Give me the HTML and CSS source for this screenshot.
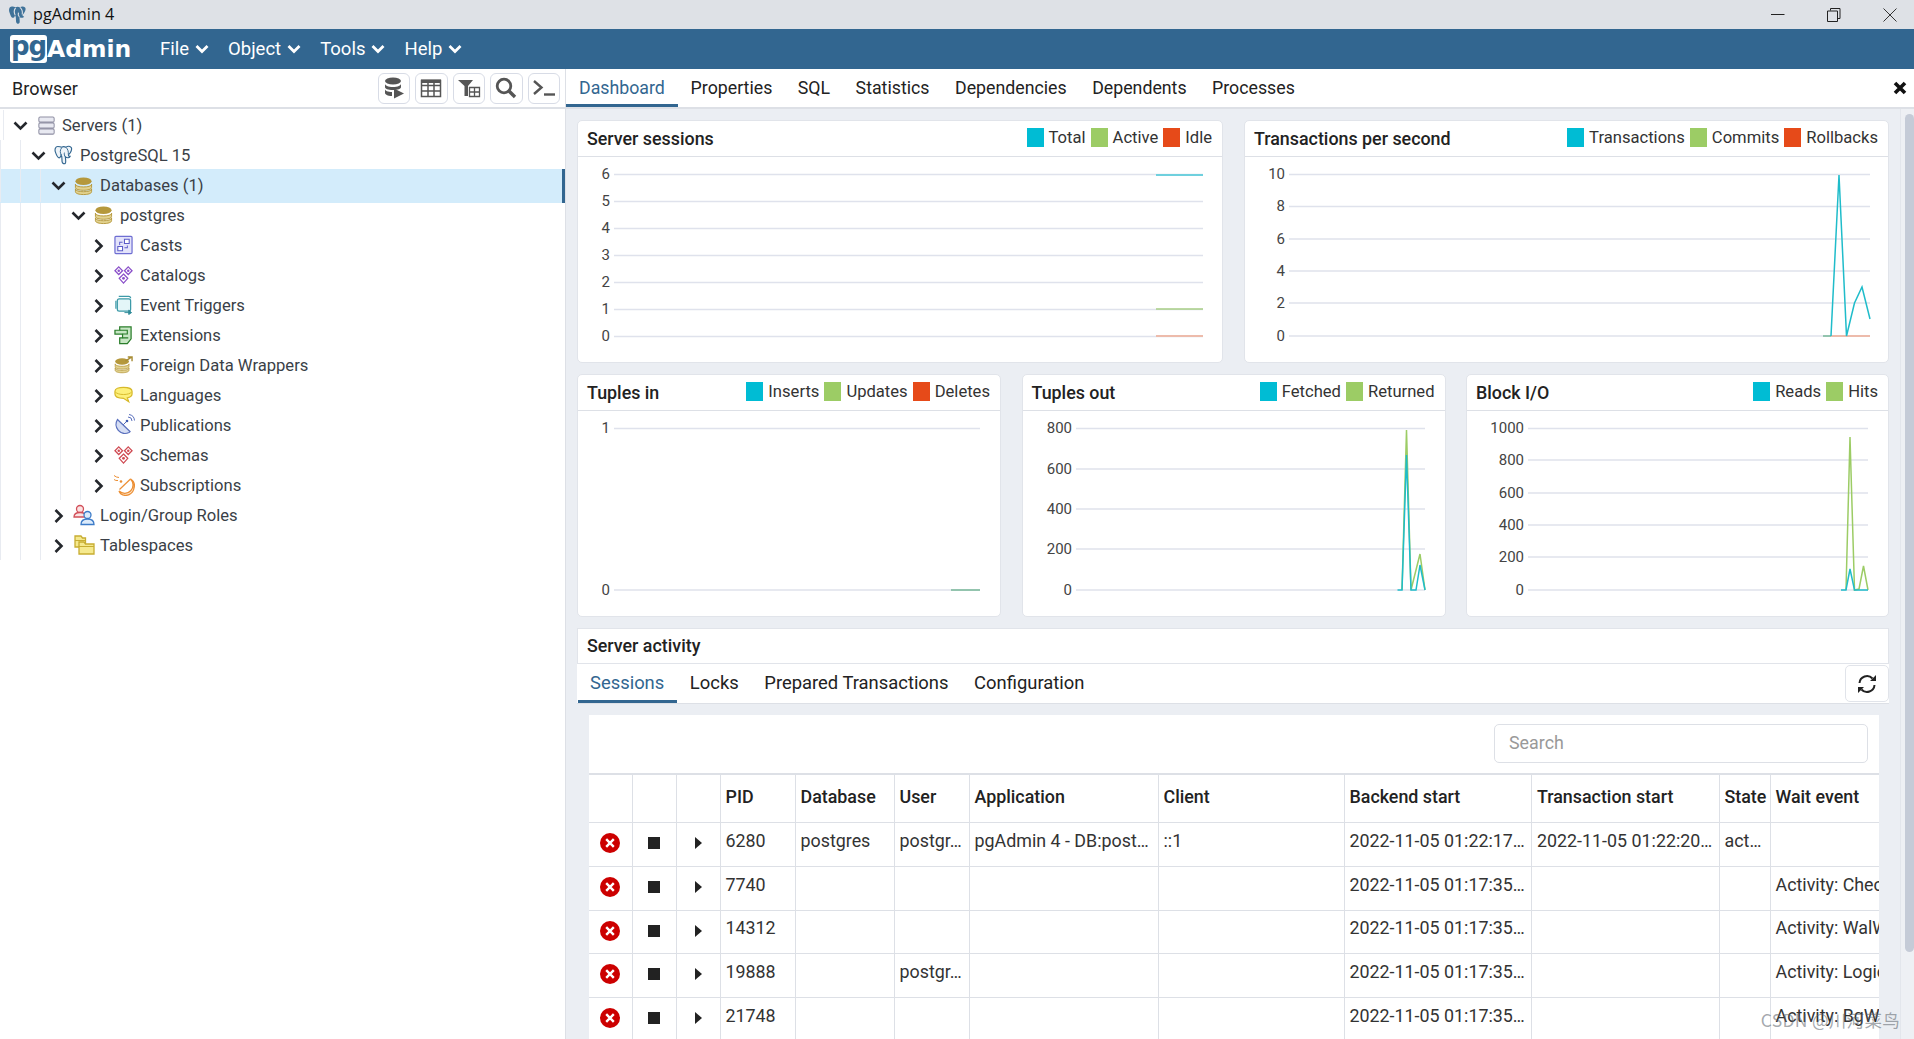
FILE: index.html
```html
<!DOCTYPE html>
<html lang="en">
<head>
<meta charset="utf-8">
<title>pgAdmin 4</title>
<link rel="stylesheet" href="styles.css">
</head>
<body>
<svg class="defs" width="0" height="0" aria-hidden="true">
  <defs>
    <symbol id="down" viewBox="0 0 17 17"><path d="M2.500 5.500l6 6 6-6" fill="none" stroke="#24272c" stroke-width="2.600"/></symbol>
    <symbol id="right" viewBox="0 0 17 17"><path d="M5.500 3l6 6-6 6" fill="none" stroke="#24272c" stroke-width="2.600"/></symbol>
    <symbol id="menu-chev" viewBox="0 0 14 10"><path d="M1.500 2l5.500 5.500L12.500 2" fill="none" stroke="#fff" stroke-width="2.800"/></symbol>
    <symbol id="db" viewBox="0 0 20 20">
      <path d="M1.500 13v3c0 2 4 3 8.500 3s8.500-1 8.500-3v-3c0 2-4 3-8.500 3s-8.500-1-8.500-3z" fill="#e2d28f" stroke="#b5983c"/>
      <path d="M1.500 8v3.500c0 2 4 3 8.500 3s8.500-1 8.500-3V8c0 2-4 3-8.500 3S1.500 10 1.500 8z" fill="#e2d28f" stroke="#b5983c"/>
      <ellipse cx="10" cy="5" rx="8.500" ry="4" fill="#b5983c"/>
    </symbol>
    <symbol id="elephant" viewBox="0 0 20 20">
      <path d="M4 1C1.500 1 .5 4 1.500 7c1 3 2 6 4 6 1.500 0 1.500-2 2-3 .3 1 .5 2 .7 2l.3 5c.2 2 2.500 3 3.500 1.500.8-1.500 0-4.500 0-6.500 2 1.500 4.500 1 5-.5-1.500 0-2-1-1.500-2 2-1.500 4-6 2.500-7.500C16.500.5 14 .8 12.500 1.800 11 1 9.500 1 8 1.800 7 1.200 5.500 1 4 1z" fill="#eef4f9" stroke="#326690" stroke-width="1.200"/>
      <path d="M8 2.500C6 5 6.500 8 7.500 10M12.500 2c2 1.500 3 4.500 2.500 7.500M12 12c-1-1-1.500-3-1-4.500" fill="none" stroke="#326690" stroke-width="1"/>
    </symbol>
    <symbol id="elephant-solid" viewBox="0 0 20 20">
      <path d="M4 1C1.500 1 .5 4 1.500 7c1 3 2 6 4 6 1.500 0 1.500-2 2-3 .3 1 .5 2 .7 2l.3 5c.2 2 2.500 3 3.500 1.500.8-1.500 0-4.500 0-6.500 2 1.500 4.500 1 5-.5-1.500 0-2-1-1.500-2 2-1.500 4-6 2.500-7.500C16.500.5 14 .8 12.500 1.800 11 1 9.500 1 8 1.800 7 1.200 5.500 1 4 1z" fill="#3f7299"/>
      <path d="M8 2.500C6 5 6.500 8 7.500 10M12.500 2c2 1.500 3 4.500 2.500 7.500M12 12c-1-1-1.500-3-1-4.500" fill="none" stroke="#dee1e6" stroke-width="1.200"/>
    </symbol>
    <symbol id="diamonds" viewBox="0 0 20 20">
      <g fill="#fff" stroke="currentColor" stroke-width="1.300">
        <path d="M5 1.500L9 5.500 5 9.500 1 5.500z"/><path d="M15 1.500l4 4-4 4-4-4z"/><path d="M10 9l4.500 4.500L10 18.500l-4.500-5z"/>
      </g>
      <g fill="currentColor"><circle cx="5" cy="5.500" r="1.300"/><circle cx="15" cy="5.500" r="1.300"/><circle cx="10" cy="13.500" r="1.500"/></g>
    </symbol>
    <symbol id="xcircle" viewBox="0 0 20 20">
      <circle cx="10" cy="10" r="10" fill="#cc0000"/>
      <path d="M6.200 6.200l7.600 7.600M13.800 6.200l-7.600 7.600" stroke="#fff" stroke-width="2.400"/>
    </symbol>
  </defs>
</svg>

<header class="titlebar">
  <svg class="title-icon" width="19" height="20"><use href="#elephant-solid"/></svg>
  <span class="title-text">pgAdmin 4</span>
  <div class="win-buttons">
    <svg width="14" height="14" viewBox="0 0 14 14"><path d="M0 6.500h13.500" stroke="#222" stroke-width="1"/></svg>
    <svg width="14" height="14" viewBox="0 0 14 14"><path d="M3.500 2.500V.5h9.500v10h-2M.5 3h10v10.500H.5z" fill="none" stroke="#222"/></svg>
    <svg width="14" height="14" viewBox="0 0 14 14"><path d="M.5.500l13 13M13.500.5l-13 13" stroke="#333" stroke-width="1"/></svg>
  </div>
</header>

<nav class="navbar">
  <div class="logo"><span class="logo-pg">pg</span><span class="logo-admin">Admin</span></div>
  <div class="menu">
    <span class="menu-item">File<svg width="14" height="10"><use href="#menu-chev"/></svg></span>
    <span class="menu-item">Object<svg width="14" height="10"><use href="#menu-chev"/></svg></span>
    <span class="menu-item">Tools<svg width="14" height="10"><use href="#menu-chev"/></svg></span>
    <span class="menu-item">Help<svg width="14" height="10"><use href="#menu-chev"/></svg></span>
  </div>
</nav>

<main class="main">
  <aside class="browser">
    <div class="browser-head">
      <span class="browser-title">Browser</span>
      <div class="tools">
        <button class="tool"><svg width="22" height="24" viewBox="0 0 22 24"><ellipse cx="10" cy="5" rx="8" ry="3.500" fill="#555"/><path d="M2 7.500c0 2 3 3.500 8 3.500s8-1.500 8-3.500V11c0 2-3 3-8 3s-8-1-8-3zM2 13v4c0 1.500 2.500 3 7 3v-4c-4 0-7-1-7-3z" fill="#555"/><path d="M11 12.500v10l10-5z" fill="#555"/></svg></button>
        <button class="tool"><svg width="22" height="20" viewBox="0 0 22 20"><path d="M1.500 2.500h19v16h-19zM1.500 7.500h19M1.500 13h19M8 2.500v16M14 2.500v16" fill="none" stroke="#555" stroke-width="1.500"/><path d="M1 1.500h20V5H1z" fill="#555"/></svg></button>
        <button class="tool"><svg width="24" height="20" viewBox="0 0 24 20"><path d="M1 2h15l-5 6v10H7.500V8z" fill="#555"/><path d="M12.500 9.500h10v9h-10zM12.500 14h10M17.500 9.500v9" fill="#fff" stroke="#555" stroke-width="1.300"/></svg></button>
        <button class="tool"><svg width="22" height="22" viewBox="0 0 22 22"><circle cx="9" cy="9" r="6.800" fill="none" stroke="#555" stroke-width="2.800"/><path d="M14 14l6 6" stroke="#555" stroke-width="3.400"/></svg></button>
        <button class="tool"><svg width="24" height="20" viewBox="0 0 24 20"><path d="M2 3l7.500 6.500L2 16" fill="none" stroke="#555" stroke-width="2.400"/><path d="M12 16.500h11" stroke="#555" stroke-width="2.400"/></svg></button>
      </div>
    </div>
    <div class="tree">
      <div class="row row-first"><span class="g g-first"></span><svg class="chev" width="17" height="17"><use href="#down"/></svg><svg class="ico ico-servers" width="17" height="19" viewBox="0 0 20 20" preserveAspectRatio="none"><g fill="#e8e9f1" stroke="#8f8fa3" stroke-width="1.200"><rect x="1" y="1" width="18" height="5.500" rx="1.500"/><rect x="1" y="7.300" width="18" height="5.500" rx="1.500"/><rect x="1" y="13.600" width="18" height="5.500" rx="1.500"/></g></svg><span>Servers (1)</span></div>
      <div class="row"><span class="g"></span><span class="g"></span><svg class="chev" width="17" height="17"><use href="#down"/></svg><svg class="ico" width="19" height="20"><use href="#elephant"/></svg><span>PostgreSQL 15</span></div>
      <div class="row selected"><span class="g"></span><span class="g"></span><span class="g"></span><svg class="chev" width="17" height="17"><use href="#down"/></svg><svg class="ico" width="19" height="20"><use href="#db"/></svg><span>Databases (1)</span></div>
      <div class="row"><span class="g"></span><span class="g"></span><span class="g"></span><span class="g"></span><svg class="chev" width="17" height="17"><use href="#down"/></svg><svg class="ico" width="19" height="20"><use href="#db"/></svg><span>postgres</span></div>
      <div class="row"><span class="g"></span><span class="g"></span><span class="g"></span><span class="g"></span><span class="g"></span><svg class="chev" width="17" height="17"><use href="#right"/></svg><svg class="ico" width="19" height="20" viewBox="0 0 20 20"><rect x="1" y="1" width="18" height="18" rx="1" fill="#e3e3fa" stroke="#6e6ed2" stroke-width="1.300"/><path d="M11 4h5v4.500h-5zM4 11.500h5V16H4zM6 10V7h3M14 10.500V13h-3" fill="#fff" stroke="#5a5ac8" stroke-width="1.100"/></svg><span>Casts</span></div>
      <div class="row"><span class="g"></span><span class="g"></span><span class="g"></span><span class="g"></span><span class="g"></span><svg class="chev" width="17" height="17"><use href="#right"/></svg><svg class="ico ico-purple" width="19" height="20"><use href="#diamonds"/></svg><span>Catalogs</span></div>
      <div class="row"><span class="g"></span><span class="g"></span><span class="g"></span><span class="g"></span><span class="g"></span><svg class="chev" width="17" height="17"><use href="#right"/></svg><svg class="ico" width="19" height="20" viewBox="0 0 20 20"><path d="M5 1h10.500a2 2 0 0 1 2 2M2 5.500V14" fill="none" stroke="#3d9aa8" stroke-width="1.300"/><rect x="3.500" y="3.500" width="14" height="13" rx="2" fill="#e3f6f8" stroke="#3d9aa8" stroke-width="1.300"/><path d="M11 18h6M15.500 15.500l3 2.500-3 2z" fill="#2f8a98" stroke="#2f8a98"/></svg><span>Event Triggers</span></div>
      <div class="row"><span class="g"></span><span class="g"></span><span class="g"></span><span class="g"></span><span class="g"></span><svg class="chev" width="17" height="17"><use href="#right"/></svg><svg class="ico" width="19" height="20" viewBox="0 0 20 20"><path d="M1 5h5V1.500h12V14l-4 5H6v-6h3V9H1z" fill="#c7e6c4" stroke="#2a7d2a" stroke-width="1.300"/><path d="M6 5h8v4H9M9 13h6" fill="none" stroke="#2a7d2a" stroke-width="1.200"/></svg><span>Extensions</span></div>
      <div class="row"><span class="g"></span><span class="g"></span><span class="g"></span><span class="g"></span><span class="g"></span><svg class="chev" width="17" height="17"><use href="#right"/></svg><svg class="ico" width="19" height="20" viewBox="0 0 20 20"><use href="#db" x="0" y="1" width="17" height="19"/><path d="M12 6l6-4M14.500 1.500h4.500v4.500" fill="none" stroke="#a88d36" stroke-width="1.500"/></svg><span>Foreign Data Wrappers</span></div>
      <div class="row"><span class="g"></span><span class="g"></span><span class="g"></span><span class="g"></span><span class="g"></span><svg class="chev" width="17" height="17"><use href="#right"/></svg><svg class="ico" width="19" height="20" viewBox="0 0 20 20"><path d="M1 6c0-2.500 4-4 9-4s9 1.500 9 4v3c0 2-2.500 3.500-5 4l1.500 4-5.500-3.500c-5 0-9-1.500-9-4.500z" fill="#fdf07a" stroke="#d7b92a" stroke-width="1.300"/><path d="M1.500 7c1.500 1.500 4.500 2.500 8.500 2.500s7-1 8.500-2.500" fill="none" stroke="#d7b92a"/></svg><span>Languages</span></div>
      <div class="row"><span class="g"></span><span class="g"></span><span class="g"></span><span class="g"></span><span class="g"></span><svg class="chev" width="17" height="17"><use href="#right"/></svg><svg class="ico ico-wide" width="22" height="22" viewBox="0 0 22 22"><path d="M4.500 5.500a9 9 0 0 0 11.500 13 8 8 0 0 0 1-1z" fill="#d6def4" stroke="#5a70bd" stroke-width="1.300"/><path d="M10 11l4-4" stroke="#5a70bd"/><circle cx="14" cy="7" r="1.300" fill="#3e5ab0"/><path d="M15 3a4 4 0 0 1 4 4M16 .5a6.500 6.500 0 0 1 5.500 6" fill="none" stroke="#5a70bd"/></svg><span>Publications</span></div>
      <div class="row"><span class="g"></span><span class="g"></span><span class="g"></span><span class="g"></span><span class="g"></span><svg class="chev" width="17" height="17"><use href="#right"/></svg><svg class="ico ico-red" width="19" height="20"><use href="#diamonds"/></svg><span>Schemas</span></div>
      <div class="row"><span class="g"></span><span class="g"></span><span class="g"></span><span class="g"></span><span class="g"></span><svg class="chev" width="17" height="17"><use href="#right"/></svg><svg class="ico ico-wide" width="22" height="22" viewBox="0 0 22 22"><path d="M17.500 5a8 8 0 0 1-11.500 12 9 9 0 0 0 2 3 8.500 8.500 0 0 0 13-6 8 8 0 0 0-3.500-9z" fill="#fce5cd" stroke="#ec8f34" stroke-width="1.300"/><path d="M6.500 15.500l11-10.500" stroke="#ec8f34" stroke-width="1.200"/><circle cx="8" cy="7.500" r="1.300" fill="#ec8f34"/><path d="M1 5.500a5 5 0 0 0 4 1M1 1.500a8 8 0 0 0 5 2" fill="none" stroke="#ec8f34"/></svg><span>Subscriptions</span></div>
      <div class="row"><span class="g"></span><span class="g"></span><span class="g"></span><svg class="chev" width="17" height="17"><use href="#right"/></svg><svg class="ico ico-wide" width="22" height="22" viewBox="0 0 22 22"><circle cx="7" cy="5" r="3.500" fill="#fbe3e3" stroke="#d2505a" stroke-width="1.300"/><path d="M1 13c0-3 2.500-4.500 6-4.500s6 1.500 6 4.500z" fill="#fbe3e3" stroke="#d2505a" stroke-width="1.300"/><circle cx="14.500" cy="11" r="3.500" fill="#dcebfb" stroke="#3c7bc8" stroke-width="1.300"/><path d="M8 20.500c0-3.500 2.800-5.500 6.500-5.500s6.500 2 6.500 5.500z" fill="#dcebfb" stroke="#3c7bc8" stroke-width="1.300"/></svg><span>Login/Group Roles</span></div>
      <div class="row"><span class="g"></span><span class="g"></span><span class="g"></span><svg class="chev" width="17" height="17"><use href="#right"/></svg><svg class="ico ico-wide" width="22" height="22" viewBox="0 0 22 22"><path d="M2 2h6l1.500 2h3v9H2z" fill="#f5e98e" stroke="#c7ad32" stroke-width="1.300"/><path d="M2 6.500h10.500" stroke="#c7ad32"/><path d="M6 8h5l1.500 2h8.500v10H6z" fill="#f5e98e" stroke="#c7ad32" stroke-width="1.300"/><path d="M6 12.500h15" stroke="#c7ad32"/></svg><span>Tablespaces</span></div>
    </div>
  </aside>

  <section class="content">
    <div class="tabs">
      <span class="tab active">Dashboard</span>
      <span class="tab">Properties</span>
      <span class="tab">SQL</span>
      <span class="tab">Statistics</span>
      <span class="tab">Dependencies</span>
      <span class="tab">Dependents</span>
      <span class="tab">Processes</span>
      <svg class="tab-close" width="14" height="14" viewBox="0 0 14 14"><path d="M2 2l10 10M12 2L2 12" stroke="#111" stroke-width="3.600"/></svg>
    </div>
    <div class="dash-wrap">
      <div class="dash">
        <div class="grid-two">
          <article class="card">
            <header class="card-head"><h2>Server sessions</h2><div class="legend"><i class="sq cyan"></i><span>Total</span><i class="sq green"></i><span>Active</span><i class="sq red"></i><span>Idle</span></div></header>
            <svg class="chart" width="644" height="205">
              <g class="grid"><path d="M36 17.500h589M36 44.500h589M36 71.500h589M36 98.500h589M36 125.500h589M36 152.500h589M36 179.500h589"/></g>
              <g class="axis"><text x="32" y="23">6</text><text x="32" y="50">5</text><text x="32" y="77">4</text><text x="32" y="104">3</text><text x="32" y="131">2</text><text x="32" y="158">1</text><text x="32" y="185">0</text></g>
              <path class="seg-c" d="M578 18h47"/><path class="seg-g" d="M578 152h47"/><path class="seg-r" d="M578 179h47"/>
            </svg>
          </article>
          <article class="card">
            <header class="card-head"><h2>Transactions per second</h2><div class="legend"><i class="sq cyan"></i><span>Transactions</span><i class="sq green"></i><span>Commits</span><i class="sq red"></i><span>Rollbacks</span></div></header>
            <svg class="chart" width="643" height="205">
              <g class="grid"><path d="M44 17.500h581M44 49.500h581M44 82h581M44 114h581M44 146h581M44 179h581"/></g>
              <g class="axis"><text x="40" y="23">10</text><text x="40" y="55">8</text><text x="40" y="88">6</text><text x="40" y="120">4</text><text x="40" y="152">2</text><text x="40" y="185">0</text></g>
              <path class="seg-t" d="M578 179h8"/><path class="seg-r" d="M586 179h39"/>
              <path class="ln-c" d="M586 179L594 18 601.500 179 609.500 146 617 130 625 162"/>
            </svg>
          </article>
        </div>
        <div class="grid-three">
          <article class="card">
            <header class="card-head"><h2>Tuples in</h2><div class="legend"><i class="sq cyan"></i><span>Inserts</span><i class="sq green"></i><span>Updates</span><i class="sq red"></i><span>Deletes</span></div></header>
            <svg class="chart" width="422" height="205">
              <g class="grid"><path d="M36 17.500h366M36 179h366"/></g>
              <g class="axis"><text x="32" y="23">1</text><text x="32" y="185">0</text></g>
              <path class="seg-t" d="M373 179h29"/>
            </svg>
          </article>
          <article class="card">
            <header class="card-head"><h2>Tuples out</h2><div class="legend"><i class="sq cyan"></i><span>Fetched</span><i class="sq green"></i><span>Returned</span></div></header>
            <svg class="chart" width="422" height="205">
              <g class="grid"><path d="M53 17.500h349M53 58h349M53 98h349M53 138h349M53 179h349"/></g>
              <g class="axis"><text x="49" y="23">800</text><text x="49" y="64">600</text><text x="49" y="104">400</text><text x="49" y="144">200</text><text x="49" y="185">0</text></g>
              <path class="ln-g" d="M379 179L383.500 19 388 179 397 143 402 179"/>
              <path class="ln-c" d="M374.500 179h4.500L383.500 44 388 179h5L397 154 402 179"/>
            </svg>
          </article>
          <article class="card">
            <header class="card-head"><h2>Block I/O</h2><div class="legend"><i class="sq cyan"></i><span>Reads</span><i class="sq green"></i><span>Hits</span></div></header>
            <svg class="chart" width="421" height="205">
              <g class="grid"><path d="M61 17.500h340M61 49h340M61 82h340M61 114h340M61 146h340M61 179h340"/></g>
              <g class="axis"><text x="57" y="23">1000</text><text x="57" y="55">800</text><text x="57" y="88">600</text><text x="57" y="120">400</text><text x="57" y="152">200</text><text x="57" y="185">0</text></g>
              <path class="ln-g" d="M379 179L383 26 387.500 179 392 178 396.500 155 401 179"/>
              <path class="ln-c" d="M374 179h5L383 158 387.500 179H401"/>
            </svg>
          </article>
        </div>
        <article class="activity">
          <header class="card-head"><h2>Server activity</h2></header>
          <div class="subtabs">
            <span class="tab active">Sessions</span>
            <span class="tab">Locks</span>
            <span class="tab">Prepared Transactions</span>
            <span class="tab">Configuration</span>
            <button class="refresh"><svg width="22" height="22" viewBox="0 0 22 22"><path d="M3.500 10A7.500 7.500 0 0 1 16.500 5.500M18.500 12A7.500 7.500 0 0 1 5.500 16.500" fill="none" stroke="#222" stroke-width="2"/><path d="M14 8h6V2zM8 14H2v6z" fill="#222"/></svg></button>
          </div>
          <div class="sessions">
            <div class="searchbar"><input class="search" type="text" placeholder="Search"></div>
            <div class="table-clip">
              <table class="grid-table">
                <colgroup><col class="c-ic1"><col class="c-ic2"><col class="c-ic2"><col class="c-pid"><col class="c-db"><col class="c-user"><col class="c-app"><col class="c-client"><col class="c-time"><col class="c-time"><col class="c-state"><col class="c-wait"></colgroup>
                <thead>
                  <tr><th></th><th></th><th></th><th>PID</th><th>Database</th><th>User</th><th>Application</th><th>Client</th><th>Backend start</th><th>Transaction start</th><th>State</th><th>Wait event</th></tr>
                </thead>
                <tbody>
                  <tr><td class="ic"><svg width="20" height="20"><use href="#xcircle"/></svg></td><td class="ic"><i class="stop"></i></td><td class="ic"><i class="caret"></i></td><td>6280</td><td>postgres</td><td>postgr…</td><td>pgAdmin 4 - DB:post…</td><td>::1</td><td>2022-11-05 01:22:17…</td><td>2022-11-05 01:22:20…</td><td>act…</td><td></td></tr>
                  <tr><td class="ic"><svg width="20" height="20"><use href="#xcircle"/></svg></td><td class="ic"><i class="stop"></i></td><td class="ic"><i class="caret"></i></td><td>7740</td><td></td><td></td><td></td><td></td><td>2022-11-05 01:17:35…</td><td></td><td></td><td>Activity: CheckpointerMain</td></tr>
                  <tr class="short"><td class="ic"><svg width="20" height="20"><use href="#xcircle"/></svg></td><td class="ic"><i class="stop"></i></td><td class="ic"><i class="caret"></i></td><td>14312</td><td></td><td></td><td></td><td></td><td>2022-11-05 01:17:35…</td><td></td><td></td><td>Activity: WalWriterMain</td></tr>
                  <tr><td class="ic"><svg width="20" height="20"><use href="#xcircle"/></svg></td><td class="ic"><i class="stop"></i></td><td class="ic"><i class="caret"></i></td><td>19888</td><td></td><td>postgr…</td><td></td><td></td><td>2022-11-05 01:17:35…</td><td></td><td></td><td>Activity: LogicalLauncherMain</td></tr>
                  <tr><td class="ic"><svg width="20" height="20"><use href="#xcircle"/></svg></td><td class="ic"><i class="stop"></i></td><td class="ic"><i class="caret"></i></td><td>21748</td><td></td><td></td><td></td><td></td><td>2022-11-05 01:17:35…</td><td></td><td></td><td>Activity: BgWriterMain</td></tr>
                </tbody>
              </table>
            </div>
          </div>
        </article>
      </div>
      <div class="scrollbar"><div class="thumb"></div></div>
    </div>
  </section>
</main>
<div class="watermark">CSDN @川河菜鸟</div>
</body>
</html>
```
FILE: styles.css
```css
* { box-sizing: border-box; }
html, body { height: 100%; }
body {
  margin: 0;
  width: 1914px;
  height: 1039px;
  overflow: hidden;
  display: flex;
  flex-direction: column;
  position: relative;
  font-family: Roboto, "Liberation Sans", sans-serif;
  font-size: 17.85px;
  color: #222;
  background: #fff;
}
.defs { position: absolute; }

/* title bar */
.titlebar {
  height: 29px;
  flex: none;
  background: #dee1e6;
  display: flex;
  align-items: center;
  padding-left: 8px;
}
.title-text { margin-left: 6px; font-family: "Open Sans", sans-serif; font-size: 16.2px; color: #111; padding-bottom: 1px; }
.win-buttons {
  margin-left: auto;
  display: flex;
  gap: 42px;
  padding-right: 17px;
}

/* nav bar */
.navbar {
  height: 40px;
  flex: none;
  background: #326690;
  display: flex;
  align-items: center;
  padding-left: 10px;
  color: #fff;
}
.logo { display: flex; align-items: center; width: 150px; }
.logo-pg {
  width: 37px;
  height: 28px;
  background: #fff;
  color: #326690;
  border-radius: 3px;
  font: 700 26px/23px "DejaVu Sans", sans-serif;
  text-align: center;
  letter-spacing: -1px;
}
.logo-admin { font: 700 23.5px/28px "DejaVu Sans", sans-serif; color: #fff; }
.menu { display: flex; gap: 19.5px; }
.menu-item { display: flex; align-items: center; gap: 5.5px; font-size: 18.5px; }

/* main */
.main { flex: 1; display: flex; min-height: 0; }
.browser { width: 566px; flex: none; border-right: 1px solid #dde0e6; display: flex; flex-direction: column; }
.browser-head {
  height: 40px;
  flex: none;
  border-bottom: 2px solid #dde0e6;
  display: flex;
  align-items: center;
  padding-left: 12px;
}
.browser-title { font-size: 18px; color: #222; }
.tools { margin-left: auto; display: flex; gap: 5px; padding-right: 5px; }
.tool {
  width: 32.5px;
  height: 31px;
  padding: 0;
  background: #fff;
  border: 1px solid #d8dce6;
  border-radius: 6px;
  display: flex;
  align-items: center;
  justify-content: center;
}
.tree { padding-top: 1px; font-size: 16.6px; color: #3a3f47; }
.row { height: 30px; display: flex; align-items: stretch; }
.row > span:last-child { align-self: center; }
.row > svg { align-self: center; flex: none; }
.g { width: 20px; flex: none; border-left: 1px solid #e8ebf1; }
.g-first { width: 19px; margin-left: 3px; }
.chev { margin-left: -10px; }
.ico { margin: 0 7px; }
.ico-servers { margin: 0 7px 0 9px; }
.ico-wide { margin: 0 5px 0 6px; }
.ico-purple { color: #8a4fc9; }
.ico-red { color: #cf4a52; }
.selected { height: 34px; margin: -1px 0 -3px; padding-bottom: 1px; background: #d3ecfb; border-right: 3px solid #326690; position: relative; }

/* content */
.content { flex: 1; min-width: 0; display: flex; flex-direction: column; }
.tabs {
  height: 40px;
  flex: none;
  display: flex;
  align-items: stretch;
  border-bottom: 2px solid #dde0e6;
}
.tab { padding: 3px 12.75px 0; line-height: 32px; font-size: 17.75px; white-space: nowrap; color: #222; border-bottom: 3px solid transparent; }
.tabs .tab:first-child { padding-left: 13px; padding-right: 13px; }
.tab.active { color: #326690; border-bottom-color: #326690; }
.tab-close { margin: 12px 7px 0 auto; }

.dash-wrap { flex: 1; min-height: 0; display: flex; background: #ebeef3; }
.dash { flex: 1; min-width: 0; padding: 11px 11px 0; display: flex; flex-direction: column; gap: 11px; }
.grid-two { display: grid; grid-template-columns: 646px 645px; column-gap: 21px; }
.grid-three { display: grid; grid-template-columns: 424px 424px 423px; column-gap: 20.5px; }
.card { height: 243px; background: #fff; border: 1px solid #e1e4ea; border-radius: 5px; }
.card-head {
  height: 36px;
  display: flex;
  align-items: center;
  justify-content: space-between;
  padding: 0 10px 0 9px;
  border-bottom: 1.5px solid #dde0e6;
}
.card-head h2 { margin: 0; padding-bottom: 1px; font-size: 17.85px; font-weight: 500; color: #222; }
.legend { display: flex; align-items: center; padding-bottom: 2px; font-size: 16.6px; color: #333; }
.legend span { margin: 0 5px; }
.legend span:last-child { margin-right: 0; }
.sq { width: 17px; height: 19px; display: block; }
.cyan { background: #00bcd4; }
.green { background: #9ccc65; }
.red { background: #e64a19; }

.chart { display: block; }
.grid path { stroke: #dfe2ec; stroke-width: 1.5; fill: none; }
.axis { transform: translateY(-1px); }
.axis text { font: 15px Roboto, sans-serif; fill: #444; text-anchor: end; }
.seg-c { stroke: #6fd0de; stroke-width: 2; }
.seg-g { stroke: #a9cf86; stroke-width: 1.5; }
.seg-r { stroke: #edbbab; stroke-width: 2; }
.seg-t { stroke: #93c4ae; stroke-width: 2; }
.ln-c { stroke: #1fbcca; stroke-width: 1.5; fill: none; }
.ln-g { stroke: #9ccc65; stroke-width: 1.5; fill: none; }

.activity { flex: 1; min-height: 0; display: flex; flex-direction: column; }
.activity .card-head { background: #fff; border: 1px solid #e1e4ea; border-bottom-width: 1.5px; flex: none; }
.subtabs {
  height: 40px;
  flex: none;
  display: flex;
  background: #fff;
  border-bottom: 1.5px solid #dde0e6;
  position: relative;
  padding-left: 1px;
}
.subtabs .tab { padding: 2px 12.8px 0; line-height: 33.5px; font-size: 18.4px; }
.subtabs .tab:first-child { padding-left: 12px; }
.refresh {
  margin-left: auto;
  width: 44px;
  height: 37px;
  margin-top: 1px;
  background: #fff;
  border: 1px solid #e1e4ea;
  border-radius: 5px;
  padding: 0;
  display: flex;
  align-items: center;
  justify-content: center;
}
.sessions { flex: 1; min-height: 0; margin: 11px 10px 0 12px; background: #fff; display: flex; flex-direction: column; }
.searchbar { flex: none; height: 58px; padding: 9px 11px 0 0; display: flex; justify-content: flex-end; }
.search {
  width: 374px;
  height: 39px;
  border: 1px solid #dde0e6;
  border-radius: 5px;
  padding: 0 14px 2px;
  font: 17.85px Roboto, sans-serif;
  outline: none;
}
.search::placeholder { color: #999; }
.table-clip { flex: 1; min-height: 0; overflow: hidden; border-top: 2px solid #dde0e6; }
.grid-table { border-collapse: collapse; table-layout: fixed; width: 1381px; }
.c-ic1 { width: 43px; }
.c-ic2 { width: 44px; }
.c-pid { width: 75px; }
.c-db { width: 99px; }
.c-user { width: 75px; }
.c-app { width: 189px; }
.c-client { width: 186px; }
.c-time { width: 187.5px; }
.c-state { width: 51px; }
.c-wait { width: 250px; }
.grid-table th, .grid-table td {
  border-right: 1px solid #dde0e6;
  border-bottom: 1px solid #dde0e6;
  padding: 0 5px;
  text-align: left;
  white-space: nowrap;
  overflow: hidden;
}
.grid-table th { height: 47px; font-weight: 500; font-size: 17.85px; color: #222; padding-bottom: 3px; }
.grid-table td { height: 44px; padding-bottom: 8px; color: #333; }
.grid-table .short td { height: 43px; }
.grid-table td.ic { padding: 0 0 2px; text-align: center; font-size: 0; }
.grid-table td.ic svg, .stop, .caret { display: inline-block; vertical-align: middle; }
.stop { width: 12px; height: 12px; background: #222; }
.caret { width: 0; height: 0; border-left: 7px solid #222; border-top: 6.5px solid transparent; border-bottom: 6.5px solid transparent; }

.scrollbar { width: 14px; flex: none; border-left: 1px solid #e3e6ec; background: #eef0f4; padding: 5px 0 0 4px; }
.thumb { height: 838px; background: #c5cbd7; border-radius: 5px; }
.watermark {
  position: absolute;
  right: 14px;
  bottom: 7px;
  font: 17.5px "Noto Sans CJK SC", "Liberation Sans", sans-serif;
  color: rgba(90, 95, 105, 0.55);
  letter-spacing: 0.3px;
}
```
